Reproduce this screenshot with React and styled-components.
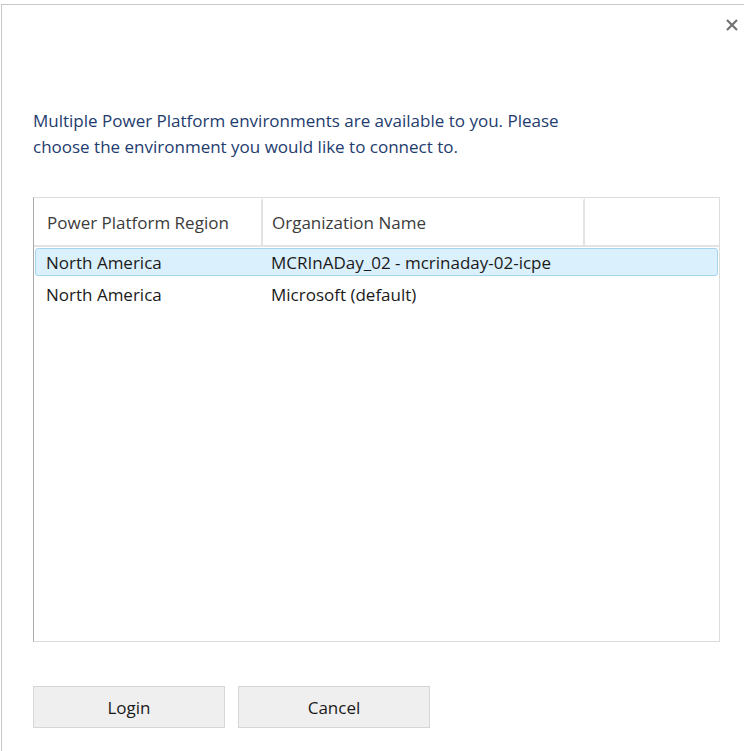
import React from "react";
import styled, { createGlobalStyle } from "styled-components";

const Global = createGlobalStyle`
  html, body {
    margin: 0;
    padding: 0;
    background: #ffffff;
  }
  body {
    font-family: "Segoe UI", "Open Sans", "Noto Sans", sans-serif;
  }
`;

const rows = [
  { region: "North America", org: "MCRInADay_02 - mcrinaday-02-icpe", selected: true },
  { region: "North America", org: "Microsoft (default)" },
];

const App = () => {
  return (
    <>
      <Global />
      <Window>
        <CloseButton aria-label="Close">
          <svg width="12" height="12" viewBox="0 0 12 12">
            <path d="M1 1 L11 11 M11 1 L1 11" stroke="#727272" strokeWidth="2.2" />
          </svg>
        </CloseButton>
        <Intro>
          Multiple Power Platform environments are available to you. Please
          <br />
          choose the environment you would like to connect to.
        </Intro>
        <Grid>
          <HeaderRow>
            <HeaderCell width={229} pad={13}>Power Platform Region</HeaderCell>
            <HeaderCell width={322} pad={9}>Organization Name</HeaderCell>
            <HeaderCell last />
          </HeaderRow>
          <Body>
            {rows.map((r, i) => (
              <Row key={i} selected={r.selected}>
                <Cell width={225}>{r.region}</Cell>
                <Cell>{r.org}</Cell>
              </Row>
            ))}
          </Body>
        </Grid>
        <Actions>
          <Button>Login</Button>
          <Button>Cancel</Button>
        </Actions>
      </Window>
    </>
  );
};

const Window = styled.div`
  position: relative;
  width: 743px;
  height: 747px;
  margin-top: 4px;
  margin-left: 1px;
  border-top: 1px solid #c8c8c8;
  border-left: 1px solid #c8c8c8;
  box-sizing: border-box;
  padding: 103px 24px 0 31px;
`;

const CloseButton = styled.div`
  position: absolute;
  top: 13px;
  right: 5px;
  width: 14px;
  height: 14px;
  display: flex;
  align-items: center;
  justify-content: center;
`;

const Intro = styled.p`
  margin: 0;
  font-size: 17px;
  line-height: 26px;
  color: #1e3c6e;
`;

const Grid = styled.div`
  margin-top: 37px;
  width: 687px;
  height: 445px;
  box-sizing: border-box;
  border-top: 1px solid #dcdcdc;
  border-right: 1px solid #dcdcdc;
  border-bottom: 1px solid #dcdcdc;
  border-left: 1px solid #a9a9a9;
  display: flex;
  flex-direction: column;
`;

const HeaderRow = styled.div`
  display: flex;
  height: 47px;
  border-bottom: 2px solid #e3e3e3;
`;

const HeaderCell = styled.div`
  ${(p) => (p.width ? `width: ${p.width}px;` : "flex: 1;")}
  box-sizing: border-box;
  padding-left: ${(p) => p.pad || 0}px;
  display: flex;
  align-items: center;
  font-size: 17px;
  color: #3c3c3c;
  border-right: ${(p) => (p.last ? "none" : "2px solid #e3e3e3")};
  border-top: ${(p) => (p.last ? "none" : "2px solid transparent")};
`;

const Body = styled.div`
  padding: 1px 1px 0 1px;
  display: flex;
  flex-direction: column;
  gap: 4px;
`;

const Row = styled.div`
  display: flex;
  height: 28px;
  align-items: center;
  box-sizing: border-box;
  border: 1px solid ${(p) => (p.selected ? "#a6d5ee" : "transparent")};
  border-radius: 3px;
  background: ${(p) => (p.selected ? "#daf0fc" : "transparent")};
  padding-left: 10px;
  font-size: 17px;
  color: #1a1a1a;
`;

const Cell = styled.div`
  ${(p) => (p.width ? `width: ${p.width}px;` : "flex: 1;")}
  white-space: nowrap;
`;

const Actions = styled.div`
  margin-top: 44px;
  display: flex;
  gap: 13px;
`;

const Button = styled.button`
  width: 192px;
  height: 42px;
  background: #efefef;
  border: 1px solid #d6d6d6;
  font-family: inherit;
  font-size: 17px;
  color: #1a1a1a;
  padding: 0;
`;

export default App;
